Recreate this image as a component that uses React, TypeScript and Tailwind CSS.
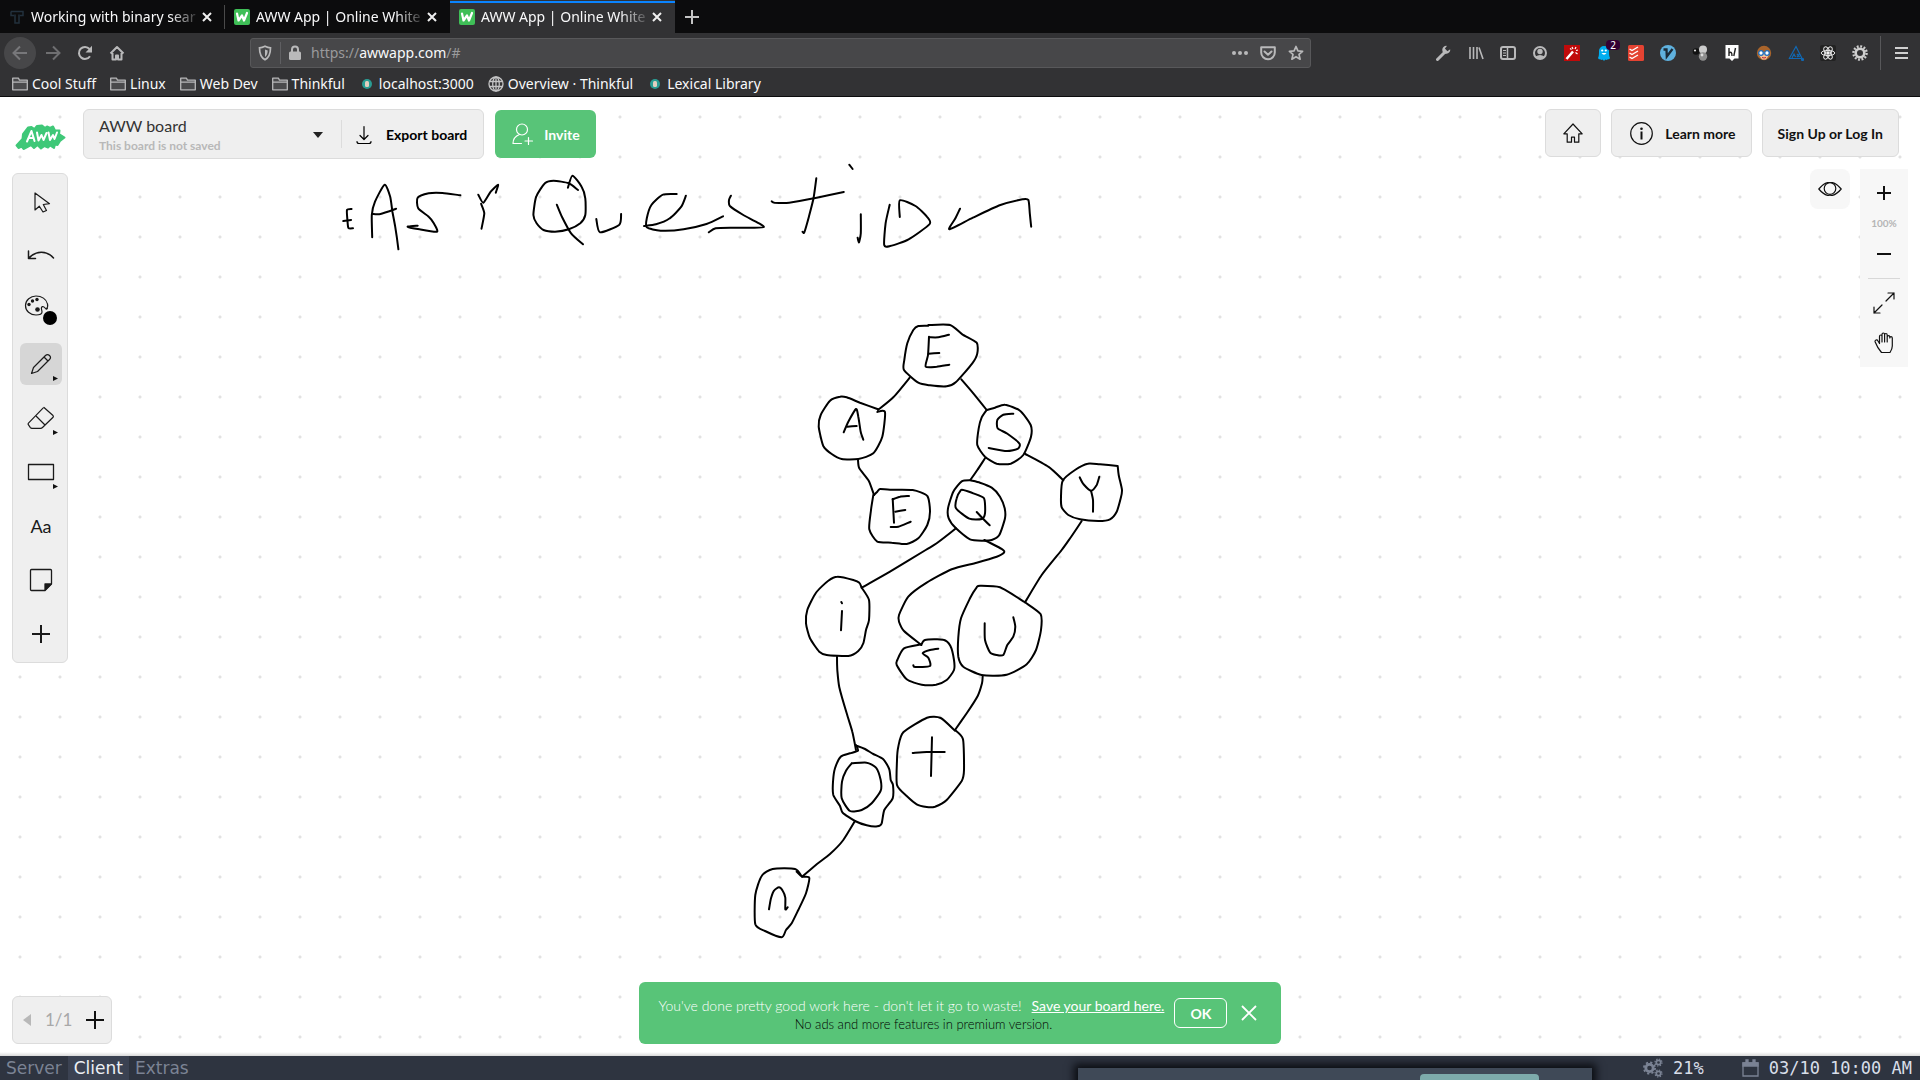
import React from "react";

type Children = { children: React.ReactNode };

/* ---------- freehand strokes ---------- */

type Sheet = { x: number; y: number; sx: number; sy: number; strokes: string[] };

const sheets: Sheet[] = [
  {
    x: 330, y: 90, sx: 720 / 1568, sy: 1 / 3,
    strokes: [
      "47,357 37,360 38,390 40,414 50,415",
      "29,393 46,390",
      "92,442 91,375 98,335 119,284 131,320 136,365 142,410 149,478",
      "92,372 110,372 144,356",
      "284,316 245,309 215,310 191,323 192,355 215,380 226,400 233,425 195,418 169,410 191,407",
      "323,314 334,338 350,305 366,284 361,308",
      "329,341 336,370 330,416",
      "540,300 520,280 487,272 468,280 449,320 443,375 450,400 465,420 490,425 520,418 545,400 556,375 556,325 548,290 528,257 518,293",
      "494,344 505,380 525,430 551,463",
      "580,387 588,427 630,404 634,372",
      "755,312 725,314 700,345 690,385 690,412 720,422 770,418 820,402 856,379",
      "684,408 710,403 740,385 765,350 775,317",
      "873,317 869,330 871,348 900,375 945,411 880,413 840,415 825,427",
      "962,334 968,338 1000,338 1060,323 1119,306",
      "1059,265 1053,325 1043,380 1033,427 1029,425",
      "1131,224 1138,237",
      "1156,373 1156,430 1152,457 1149,443",
      "1219,344 1210,400 1207,465 1220,468 1260,448 1306,402 1300,380 1275,348 1241,331 1241,381",
      "1372,356 1362,385 1349,418 1400,383 1460,345 1508,328 1521,330 1524,370 1527,410",
    ],
  },
  {
    x: 790, y: 310, sx: 1 / 3, sy: 1 / 3,
    strokes: [
      "415,47 385,48 370,60 352,100 343,150 342,180 385,218 420,226 470,229 497,217 547,160 562,130 560,98 517,73 480,45 415,45",
      "417,80 414,135 407,170 440,170 478,164",
      "418,82 445,82 477,74",
      "416,131 448,129",
      "359,203 310,262 264,300",
      "264,298 210,278 170,262 150,260 120,272 92,315 86,350 100,408 125,432 155,447 205,447 250,430 277,380 285,306 262,306",
      "161,367 175,335 198,297 205,320 212,365 220,389",
      "172,350 200,348",
      "204,450 208,475 236,512 252,555",
      "252,555 262,545 270,537 300,539 368,540 412,558 420,605 412,645 385,685 350,702 305,698 262,695 238,658 243,600 250,555",
      "308,567 312,638",
      "308,568 330,560 357,558",
      "316,605 346,600",
      "302,651 325,650 362,635",
      "514,208 550,250 590,300",
      "590,300 615,293 645,284 690,302 722,345 723,380 700,435 662,461 620,461 585,440 562,405 566,355 575,322 590,300",
      "670,311 640,314 622,330 623,355 650,370 688,400 684,416 650,423 596,414",
      "585,445 562,480 541,510",
      "541,511 515,514 490,545 474,595 476,625 498,655 540,688 580,692 605,690 628,675 645,625 644,595 630,560 605,533 570,518 541,511",
      "524,541 550,550 582,565 585,610 575,627 538,626 498,595 500,565 512,541 520,540",
      "560,606 599,646",
      "706,432 775,470 820,511",
      "983,468 930,463 893,461 855,480 818,512 813,560 815,592 835,615 870,628 925,633 960,628 980,605 992,565 996,540 986,495 983,468",
      "869,502 880,522 903,542 920,525 928,500",
      "903,542 909,570 909,605",
    ],
  },
  {
    x: 780, y: 550, sx: 1 / 3, sy: 1 / 3,
    strokes: [
      "905,-87 875,-42 845,0 785,75 735,157",
      "528,-65 470,-20 437,0 330,65 245,113",
      "613,-30 667,-2 672,8 650,20 590,38 515,58 440,98 385,140 357,195 357,215 372,243 424,285",
      "245,113 238,98 220,90 172,80 145,92 108,128 82,180 78,220 90,265 118,305 140,315 205,318 235,303 250,280 258,240 267,210 267,150 245,113",
      "184,156 186,160",
      "186,183 183,241",
      "171,320 172,360 178,412 200,490 217,545 228,600",
      "424,285 435,270 490,269 511,287 522,330 522,360 500,390 468,404 425,404 380,388 350,345 352,330 372,295 424,283",
      "475,296 450,300 428,310 445,323 450,348 405,351 400,346",
      "735,157 660,112 600,107 590,112 570,145 543,205 535,262 535,320 550,350 605,375 680,374 740,343 768,300 783,240 782,193 735,157",
      "614,220 615,270 630,307 650,315 670,315 682,285 700,260 706,230 700,202",
      "608,378 606,400 593,438 560,490 525,540",
      "525,542 482,504 441,503 370,547 355,590 351,630 351,705 380,738 410,763 440,771 465,770 500,750 545,693 552,660 549,568 525,540",
      "456,562 453,678",
      "398,609 440,606 494,606",
    ],
  },
  {
    x: 740, y: 730, sx: 1 / 3, sy: 1 / 3,
    strokes: [
      "348,45 354,62 330,70 302,80 285,115 279,155 280,195 300,228 308,248 345,273 380,286 412,289 425,280 433,240 458,205 459,165 452,150 448,118 430,88 400,72 375,57 352,48",
      "335,100 380,98 408,113 422,150 422,182 395,220 365,240 330,243 305,205 306,155 318,122 335,100",
      "345,273 310,330 270,372 230,403 186,440",
      "170,425 186,440 208,443 198,490 175,540 155,580 138,600 125,622 75,603 46,583 46,495 65,438 98,417 165,417 186,440",
      "87,538 93,505 102,482 117,472 128,482 136,503 136,538 143,532",
    ],
  },
];

const r1 = (n: number) => Math.round(n * 10) / 10;

function toPath(s: string, sh: Sheet) {
  const p = s.split(" ").map((q) => {
    const [a, b] = q.split(",").map(Number);
    return [sh.x + a * sh.sx, sh.y + b * sh.sy];
  });
  let d = `M${r1(p[0][0])} ${r1(p[0][1])}`;
  for (let i = 0; i < p.length - 1; i++) {
    const a = p[i - 1] ?? p[i];
    const b = p[i];
    const c = p[i + 1];
    const e = p[i + 2] ?? c;
    const k = 9;
    d += `C${r1(b[0] + (c[0] - a[0]) / k)} ${r1(b[1] + (c[1] - a[1]) / k)} ${r1(c[0] - (e[0] - b[0]) / k)} ${r1(c[1] - (e[1] - b[1]) / k)} ${r1(c[0])} ${r1(c[1])}`;
  }
  return d;
}

function Drawing() {
  return (
    <svg viewBox="0 97 1920 959" className="absolute left-0 top-0 w-full" fill="none" stroke="#000" strokeWidth="2" strokeLinecap="round" strokeLinejoin="round" aria-label="Binary search tree sketch">
      {sheets.flatMap((sh, i) => sh.strokes.map((s, j) => <path key={`${i}-${j}`} d={toPath(s, sh)} />))}
    </svg>
  );
}

/* ---------- icons ---------- */

function Svg({ w = 16, h = w, children, ...rest }: { w?: number; h?: number } & React.SVGProps<SVGSVGElement>) {
  return (
    <svg width={w} height={h} viewBox={`0 0 ${w} ${h}`} fill="none" stroke="currentColor" strokeWidth="2" className="shrink-0" aria-hidden="true" {...rest}>
      {children}
    </svg>
  );
}

const AwwFavicon = () => (
  <Svg stroke="#fff" strokeWidth="2.2" strokeLinecap="round" strokeLinejoin="round">
    <rect width="16" height="16" rx="2" fill="#3fbf57" stroke="none" />
    <path d="M3 4.5 4.5 11.5 8 6.5 10 11.5 13 4" />
  </Svg>
);
const ThinkfulFavicon = () => (
  <Svg stroke="#22303d" strokeWidth="1.5">
    <path d="M2 2.5h12v4h-3M2 2.5v4h3M6 5.5v8.5h4V5.5" />
  </Svg>
);
const FolderIcon = () => (
  <Svg stroke="#b8b8b9" strokeWidth="1.3">
    <path d="M.7 13.8V2.2h5.8l1 2h7.8v9.6zM.7 6.2h14.6" fill="#4a4a4c" strokeLinejoin="round" />
  </Svg>
);
const GlobeIcon = () => (
  <Svg stroke="#c4c4c5" strokeWidth="1.3">
    <circle cx="8" cy="8" r="7" />
    <ellipse cx="8" cy="8" rx="3.3" ry="7" />
    <path d="M8 1v14M1.5 5.5h13M1.5 10.5h13" />
  </Svg>
);
const DotFavicon = () => (
  <Svg stroke="none">
    <circle cx="8" cy="8" r="5" fill="#2a9d94" />
    <rect x="6" y="5" width="4" height="6" rx="1.5" fill="#e3cfc0" />
  </Svg>
);

/* ---------- browser ---------- */

function Tab({ title, icon, active = false, divider = false }: { title: string; icon: React.ReactNode; active?: boolean; divider?: boolean }) {
  return (
    <div className={`relative flex h-full w-[225px] items-center pl-[9px] pr-3 ${active ? "bg-[#323234]" : ""}`}>
      {active && <span className="absolute inset-x-0 top-px h-0.5 bg-[#0a84ff]" />}
      {divider && <span className="absolute right-0 top-[5px] h-6 w-px bg-[#4a4a4a]" />}
      {icon}
      <span className="ml-1.5 flex-1 whitespace-nowrap text-[14px] text-[#f9f9fa] [mask-image:linear-gradient(to_right,#000_82%,transparent)]">{title}</span>
      <button aria-label="Close tab" className="text-[#f0f0f0]">
        <Svg w={12}><path d="M2 2l8 8M10 2l-8 8" /></Svg>
      </button>
    </div>
  );
}

function Extensions() {
  const icons = [
    <Svg key="wrench" strokeWidth="3"><path d="M1.5 14.5 9 7" strokeLinecap="round" /><path d="M14.2 4.2a4 4 0 1 1-3.300-3.300L8.900 3.500l2.500 2.800z" fill="currentColor" stroke="none" /></Svg>,
    <Svg key="lib"><path d="M2 2v12M5.5 2v12M9 2v12M11 2.5l4 11.5" strokeWidth="1.6" /></Svg>,
    <Svg key="side"><rect x="1" y="2" width="14" height="12" rx="2" /><path d="M7.5 2v12" strokeWidth="1.5" /><path d="M3 5.5h3M3 8h3M3 10.5h3" strokeWidth="1" /></Svg>,
    <Svg key="acct"><circle cx="8" cy="8" r="6" /><circle cx="8" cy="6.500" r="2.7" fill="currentColor" stroke="none" /><path d="M3.5 11.5q4.500-3 9 0L8 14.500z" fill="currentColor" stroke="none" /></Svg>,
    <Svg key="wand" stroke="#fff"><rect width="16" height="16" fill="#c00a0a" stroke="none" /><path d="M2.5 14 9 6.5" strokeWidth="2.5" /><path d="M8 2l1 2M12 2l-1 2M14 5l-2 .5M13.5 9l-2-1.500M6 3.500l1.500 1" strokeWidth="1.2" /></Svg>,
    <span key="ghost" className="relative block">
      <Svg stroke="none"><path d="M2 13c1-2 1-4 1-7a5 5 0 0 1 10 0c0 3 0 5 1 7-1 2-2 1-2.500 1.500-1 1-1.500 0-2 0-1 1.500-2 1.500-3 0-.5 0-1 1-2 0C4 14 3 15 2 13z" fill="#00aef0" /><circle cx="6.2" cy="5.5" r="1.1" fill="#fff" /><circle cx="9.8" cy="5.5" r="1.1" fill="#fff" /><path d="M5.5 8q2.500 3.500 5 0z" fill="#fff" /></Svg>
      <span className="absolute -top-[5px] left-2.5 flex h-2.5 w-3.5 items-center justify-center rounded-sm bg-[#330033] text-[10px] leading-none text-white">2</span>
    </span>,
    <Svg key="todo" stroke="#fff" strokeWidth="1.4"><rect width="16" height="16" rx="1.5" fill="#e44332" stroke="none" /><path d="M1.5 4 4 5.500 10 2M1.500 8 4 9.500 10 6M1.500 12 4 13.500 10 10" /></Svg>,
    <Svg key="vim" stroke="#1b2b38"><circle cx="8" cy="8" r="8" fill="#5fb1de" stroke="none" /><path d="M3.5 4.500h3l.3 7L12.500 4" strokeWidth="2.3" /></Svg>,
    <Svg key="balls" stroke="none"><circle cx="4" cy="6.5" r="3.3" fill="#111" /><circle cx="3" cy="5.5" r="1.1" fill="#ddd" /><circle cx="11" cy="4.5" r="4" fill="#ccc" /><circle cx="11" cy="11.5" r="4.2" fill="#8e8e8e" /><circle cx="10" cy="10" r="1.4" fill="#ddd" /></Svg>,
    <Svg key="hyp" stroke="#222" strokeWidth="1.6"><path d="M1.5 0h13v13.500h-4L8 16l-2.500-2.500h-4z" fill="#fff" stroke="none" /><path d="M5 3v8M5 8q3-2.500 3 3M11.500 3 9.800 11" strokeWidth="1.4" /></Svg>,
    <Svg key="face" stroke="#1d6fc0" strokeWidth="1.3"><circle cx="8" cy="8" r="7.2" fill="#a9642b" stroke="none" /><path d="M3 7h10v3l-3 4.500H6L3 10z" fill="#f3c196" stroke="none" /><circle cx="5" cy="8" r="2.3" fill="#fff" /><circle cx="11" cy="8" r="2.3" fill="#fff" /><path d="M6 12.500q2 1 4 0" stroke="#b23" strokeWidth="1" /></Svg>,
    <Svg key="tri" stroke="#1168b3" strokeWidth="1.2"><path d="M1 14 8 1.500 14 13.500H1M4 13l2-4 1.500 3M9 9l2.500 3M11.500 9 9 12" /><circle cx="14.5" cy="14.5" r="1" fill="#1168b3" /></Svg>,
    <Svg key="react" stroke="#e8e8e8" strokeWidth="1"><rect width="16" height="16" rx="2" fill="#222" stroke="none" /><circle cx="8" cy="8" r="1.3" fill="#fff" /><ellipse cx="8" cy="8" rx="6.8" ry="2.6" /><ellipse cx="8" cy="8" rx="6.8" ry="2.6" transform="rotate(60 8 8)" /><ellipse cx="8" cy="8" rx="6.8" ry="2.6" transform="rotate(120 8 8)" /></Svg>,
    <Svg key="gear" stroke="#cfcfcf"><circle cx="8" cy="8" r="6.6" strokeWidth="2.4" strokeDasharray="1.9 1.556" /><circle cx="8" cy="8" r="4.3" strokeWidth="2.6" /></Svg>,
  ];
  return (
    <div className="flex items-center gap-4 text-[#b9b9ba]">
      {icons.map((icon, i) => (
        <button key={i} aria-label={`Extension ${i + 1}`} className="size-4">{icon}</button>
      ))}
    </div>
  );
}

function Bookmark({ icon, label }: { icon: React.ReactNode; label: string }) {
  return (
    <a href="#" className="flex items-center gap-1 whitespace-nowrap">
      {icon}
      {label}
    </a>
  );
}

function Browser() {
  return (
    <header className="bg-[#323234] font-['Noto_Sans',sans-serif]">
      <div className="flex h-[33px] items-center bg-[#0c0c0d]">
        <Tab title="Working with binary sear" icon={<ThinkfulFavicon />} divider />
        <Tab title="AWW App | Online White" icon={<AwwFavicon />} />
        <Tab title="AWW App | Online White" icon={<AwwFavicon />} active />
        <button aria-label="New tab" className="ml-2.5 text-[#c4c4c4]">
          <Svg w={14}><path d="M7 0v14M0 7h14" /></Svg>
        </button>
      </div>
      <div className="flex h-10 items-center pl-1 text-[#b9b9ba]">
        <button aria-label="Back" className="flex size-8 items-center justify-center rounded-full bg-[#474749] text-[#77777a]">
          <Svg><path d="M15 8H1.500M8 1.500 1.500 8 8 14.500" /></Svg>
        </button>
        <button aria-label="Forward" className="ml-[9px] text-[#6f6f71]">
          <Svg><path d="M1 8h13.500M8 1.500 14.500 8 8 14.500" /></Svg>
        </button>
        <button aria-label="Reload" className="ml-4">
          <Svg><path d="M13 11.200A6 6 0 1 1 12.500 4" /><path d="M15 .8v6.700H8.500z" fill="currentColor" stroke="none" /></Svg>
        </button>
        <button aria-label="Home" className="ml-4">
          <Svg><path d="M1.500 8.500 8 2l6.500 6.500M3.500 8v6.500h3.500v-4h2v4h3.500V8" strokeLinejoin="round" /></Svg>
        </button>
        <div className="ml-[125px] flex h-[30px] w-[1061px] items-center rounded-[3px] border border-[#58585a] bg-[#474749] px-1.5">
          <Svg><path d="M8 1.200q3 1.500 5.500 1.600c0 5.500-.8 9.500-5.500 12C3.300 12.300 2.500 8.300 2.500 2.800Q5 2.700 8 1.200z" strokeWidth="1.7" /><path d="M8 4.500v7.500c2-1.500 2.600-3.500 2.700-6.500Q9.300 5.200 8 4.500z" fill="currentColor" stroke="none" /></Svg>
          <span className="ml-[7px] h-[22px] w-px bg-[#5f5f62]" />
          <Svg className="ml-1.5 shrink-0"><path d="M5 7V4.500a3 3 0 0 1 6 0V7" /><rect x="2" y="6.5" width="12" height="8.5" rx="1.5" fill="currentColor" stroke="none" /></Svg>
          <div className="relative ml-2 flex-1 text-[14px] leading-6">
            <input aria-label="Address" className="absolute inset-0 w-full bg-transparent text-transparent outline-none" />
            <span className="text-[#9a9a9c]">https://</span><span className="text-[#f9f9fa]">awwapp.com</span><span className="text-[#9a9a9c]">/#</span>
          </div>
          <div className="flex items-center gap-3">
            <button aria-label="Page actions"><Svg><g fill="currentColor" stroke="none"><circle cx="2" cy="8" r="2" /><circle cx="8" cy="8" r="2" /><circle cx="14" cy="8" r="2" /></g></Svg></button>
            <button aria-label="Save to Pocket"><Svg><path d="M1.200 2.200h13.600v5.300a6.800 6.800 0 0 1-13.600 0zM4.500 6.500 8 9.800l3.500-3.300" strokeLinejoin="round" strokeLinecap="round" /></Svg></button>
            <button aria-label="Bookmark this page"><Svg><path d="M8 1.500 9.900 5.900 14.600 6.300 11 9.400 12.100 14.200 8 11.700 3.900 14.200 5 9.400 1.400 6.300 6.100 5.900z" strokeWidth="1.7" strokeLinejoin="round" /></Svg></button>
          </div>
        </div>
        <div className="ml-auto flex items-center">
          <Extensions />
          <span className="ml-3 h-[34px] w-px bg-[#58585a]" />
          <button aria-label="Open menu" className="ml-3.5 mr-3">
            <Svg w={13} h={16} stroke="#d0d0d0"><path d="M0 3h13M0 8h13M0 13h13" /></Svg>
          </button>
        </div>
      </div>
      <nav className="flex h-6 items-center gap-3.5 border-b border-[#0c0c0d] pb-0.5 pl-3 text-[14px] leading-5 text-[#f9f9fa]">
        <Bookmark icon={<FolderIcon />} label="Cool Stuff" />
        <Bookmark icon={<FolderIcon />} label="Linux" />
        <Bookmark icon={<FolderIcon />} label="Web Dev" />
        <Bookmark icon={<FolderIcon />} label="Thinkful" />
        <Bookmark icon={<DotFavicon />} label="localhost:3000" />
        <Bookmark icon={<GlobeIcon />} label="Overview · Thinkful" />
        <Bookmark icon={<DotFavicon />} label="Lexical Library" />
      </nav>
    </header>
  );
}

/* ---------- whiteboard ---------- */

const panel = "rounded-md border border-[#dcdcdc] bg-[#efefef]";

function TopBar() {
  return (
    <div className="flex items-start pl-[14px] pr-[21px] pt-3">
      <a href="#" aria-label="AWW" className="mt-3.5">
        <Svg w={52} h={28} stroke="#fff" strokeWidth="2" strokeLinecap="round" strokeLinejoin="round">
          <path d="M2.500 22.500 8.500 16 9 11 14 4.500 17.500 4 20.500 6 23 3 28 2.500 31 5 33 3.500 36 5 39 3.500 41 7.500 45.500 7.500 45 11 50.500 14.500 46 18 43.500 22 41 21.500 40 25 36 22.500 34 24.500 30.500 23 27 25.500 23.500 22 20 25 17 22 9.500 26 7.500 23.500 4.500 25z" fill="#3fc878" stroke="#3fc878" />
          <path d="M13 18.500 17.500 8l3 10M14.500 15h5M23 9.500l1.500 8 3-5.500 2 5 3-7M34.500 9.500l1.500 7.500 3-5 1.500 4 2.500-6.500" />
        </Svg>
      </a>
      <div className={`ml-[17px] flex h-[50px] items-center ${panel}`}>
        <button className="flex w-[257px] items-center justify-between pl-[15px] pr-[18px] text-left">
          <span className="pt-1">
            <span className="block text-[16px] leading-5 text-[#333]">AWW board</span>
            <span className="block text-[12px] font-bold leading-5 text-[#b8b8b8]">This board is not saved</span>
          </span>
          <Svg w={10} h={6} className="mt-0.5 shrink-0"><path d="M0 0h10L5 6z" fill="#222" stroke="none" /></Svg>
        </button>
        <span className="h-7 w-px bg-[#dcdcdc]" />
        <button className="flex items-center pl-[14px] pr-4 pt-px text-[14px] font-bold text-black">
          <Svg w={16} h={20} strokeWidth="1.2" strokeLinecap="round" strokeLinejoin="round"><path d="M8 1.500v13M4 10.500l4 4 4-4M1 16.500q0 2 2 2h10q2 0 2-2" /></Svg>
          <span className="ml-[14px]">Export board</span>
        </button>
      </div>
      <button className="ml-[11px] mt-px flex h-12 items-center rounded-md bg-[#58c478] pl-[17px] pr-4 text-[14px] font-bold text-white">
        <Svg w={22} h={22} strokeWidth="1.2" strokeLinecap="round" strokeLinejoin="round"><ellipse cx="10" cy="6.5" rx="5.5" ry="5.5" /><path d="M7.500 11.500C3.500 13 1 15.500 1 20.500h8.500M16.500 14.500v7M13 18h7.500" /></Svg>
        <span className="ml-2.5">Invite</span>
      </button>
      <div className="ml-auto flex gap-2.5 text-[14px] font-bold text-[#111]">
        <button aria-label="Home" className={`flex h-12 w-14 items-center justify-center ${panel}`}>
          <Svg w={20} h={20} strokeWidth="1.2" strokeLinejoin="round"><path d="M10 1 .8 10.800h3.400v8.400h4.300v-5h3v5h4.300v-8.400h3.400z" /></Svg>
        </button>
        <button className={`flex h-12 items-center pl-[18px] pr-[15px] ${panel}`}>
          <Svg w={23} h={23} strokeWidth="1.2"><circle cx="11.5" cy="11.5" r="10.8" /><path d="M11.500 9.500v8" strokeWidth="2" /><circle cx="11.5" cy="6.8" r="1.3" fill="currentColor" stroke="none" /></Svg>
          <span className="ml-3">Learn more</span>
        </button>
        <button className={`flex h-12 items-center px-[15px] ${panel}`}>Sign Up or Log In</button>
      </div>
    </div>
  );
}

function Tool({ label, active = false, more = false, children }: Children & { label: string; active?: boolean; more?: boolean }) {
  return (
    <div className="flex h-[54px] items-center justify-center">
      <button aria-label={label} className={`relative flex size-[42px] items-center justify-center rounded-md ${active ? "bg-[#d6d6d6]" : ""}`}>
        {children}
        {more && <Svg w={5} h={5} className="absolute bottom-1 right-1"><path d="M0 0l5 2.500L0 5z" fill="#111" stroke="none" /></Svg>}
      </button>
    </div>
  );
}

const thin = { strokeWidth: 1.2, strokeLinecap: "round", strokeLinejoin: "round" } as const;

function Toolbar() {
  return (
    <div className={`mt-1 w-14 py-px pl-0.5 text-[#1a1a1a] ${panel}`}>
      <Tool label="Select"><Svg w={20} h={22} {...thin}><path d="M4 2v17l4.300-3.800L12 21l3.500-1.500-3.200-6 6.200-.8z" /></Svg></Tool>
      <Tool label="Undo"><Svg w={28} h={12} {...thin} strokeWidth={1.5}><path d="M1.500 1v7.500h7M1.500 8.500C9 0 20 .5 26.500 8" /></Svg></Tool>
      <Tool label="Color">
        <Svg w={34} h={32} {...thin}>
          <path d="M22 15c1.500-1 2-3 1.500-5-1-5-6-8-11.500-8S1.500 6 1.500 11.500 6 21 12 21c3 0 6-.5 6-3 0-2-1-3-.5-4.500.8-2 3-.5 4 1 .8 1.200 1.800.8 2-.5" />
          <g fill="currentColor" stroke="none"><circle cx="5" cy="10.5" r="1.7" /><circle cx="8.5" cy="7" r="1.7" /><circle cx="13" cy="5.5" r="1.7" /><circle cx="13.5" cy="15.5" r="2.3" /></g>
          <circle cx="26" cy="24" r="7" fill="#000" stroke="none" />
        </Svg>
      </Tool>
      <Tool label="Pencil" active more><Svg w={22} h={22} {...thin}><path d="M1.500 20.500 3.500 14.500 15.500 2.500q2-2 4 0t0 4L7.500 18.500zM14 4l4 4" /></Svg></Tool>
      <Tool label="Eraser" more><Svg w={28} h={24} {...thin}><path d="M17 1.500 26 9.500q.8 1-.2 2L15.500 21.500q-.8.8-2 .8H5q-1 0-1.800-1L1.500 18.800q-.8-1 .2-2L16 2.200M9.500 10.500 18 19" /></Svg></Tool>
      <Tool label="Shape" more><Svg w={28} h={18} {...thin} strokeWidth={1.3}><rect x="1.5" y="1.5" width="25" height="15" /></Svg></Tool>
      <Tool label="Text"><span className="text-[18px]">Aa</span></Tool>
      <Tool label="Note"><Svg w={24} h={24} {...thin} strokeWidth={1.3}><path d="M1.500 2.500q0-1 1-1h19q1 0 1 1V16L16 22.500H2.500q-1 0-1-1z" /><path d="M22 16h-6v6z" fill="currentColor" /></Svg></Tool>
      <Tool label="Add"><Svg w={18}><path d="M9 0v18M0 9h18" /></Svg></Tool>
    </div>
  );
}

function ViewTools() {
  return (
    <div className="flex items-start gap-2.5 text-[#111]">
      <button aria-label="Toggle visibility" className="flex size-10 items-center justify-center rounded-lg bg-[#f7f7f7]">
        <Svg w={24} h={14} {...thin}><path d="M.8 7Q12-6.500 23.200 7 12 20.500.8 7z" /><circle cx="12" cy="6.5" r="5.8" /></Svg>
      </button>
      <div className="flex h-[198px] w-12 flex-col items-center bg-[#f7f7f7] pt-[17px]">
        <button aria-label="Zoom in"><Svg w={14}><path d="M7 0v14M0 7h14" /></Svg></button>
        <span className="mt-[17px] text-[10px] font-bold leading-3 text-[#b5b5b5]">100%</span>
        <button aria-label="Zoom out" className="mt-[18px]"><Svg w={14}><path d="M0 7h14" /></Svg></button>
        <span className="mt-[17px] h-px w-8 bg-[#d8d8d8]" />
        <button aria-label="Full screen" className="mt-[13px]"><Svg w={22} {...thin}><path d="M13 9l8-8M15 1h6v6M9 13l-8 8M1 15v6h6" /></Svg></button>
        <button aria-label="Pan" className="mt-[18px]"><Svg w={20} h={22} {...thin}><path d="M5.500 11.500V4.500q0-1.500 1.300-1.500T8 4.500V10M8 4.500V2.500Q8 1 9.300 1t1.300 1.500V10M10.600 3q0-1.500 1.300-1.500t1.300 1.500v7M13.200 5q0-1.400 1.300-1.400T15.800 5v1q0-1.300 1.200-1.300T18.300 6v8q0 3-2.300 6.500H7.500C5 17.500 3 15 1.200 10q-.5-1.500.8-2t2 1l1.500 2.500" /></Svg></button>
      </div>
    </div>
  );
}

function BottomBar() {
  return (
    <div className="grid grid-cols-[1fr_auto_1fr] items-end px-3 pb-3">
      <div className={`flex h-12 w-[100px] items-center pl-2.5 ${panel}`}>
        <button aria-label="Previous page"><Svg w={8} h={12}><path d="M8 0v12L0 6z" fill="#b8b8b8" stroke="none" /></Svg></button>
        <span className="ml-3.5 w-[26px] text-[17px] text-[#a8a8a8]">1/1</span>
        <button aria-label="Add page" className="ml-[15px] text-[#111]"><Svg w={18}><path d="M9 0v18M0 9h18" /></Svg></button>
      </div>
      <div className="flex h-[62px] items-center rounded-md bg-[#58c478] pl-5 pr-6 text-white">
        <div className="pt-1 text-center text-[14px] leading-[18px]">
          <p><span className="font-light">You've done pretty good work here - don't let it go to waste!</span><a href="#" className="ml-2.5 underline">Save your board here.</a></p>
          <p className="pl-6 text-[13px] font-light text-black">No ads and more features in premium version.</p>
        </div>
        <button className="ml-2.5 h-[30px] w-[53px] rounded-md border border-white text-[14px] font-bold">OK</button>
        <button aria-label="Dismiss" className="ml-3.5"><Svg w={16} strokeWidth="1.8"><path d="M1 1l14 14M15 1 1 15" /></Svg></button>
      </div>
    </div>
  );
}

function Board() {
  return (
    <main className="relative flex flex-1 flex-col overflow-hidden bg-white bg-[radial-gradient(circle_at_20px_20px,#e2e2e2_1px,transparent_2px)] bg-[length:40px_40px] font-[Lato,sans-serif]">
      <Drawing />
      <div className="relative flex flex-1 flex-col">
        <TopBar />
        <div className="mb-auto mt-2.5 flex items-start justify-between px-3">
          <Toolbar />
          <ViewTools />
        </div>
        <BottomBar />
      </div>
      <div className="absolute inset-x-0 bottom-0 h-1 bg-gradient-to-b from-transparent to-black/15" />
    </main>
  );
}

function StatusBar() {
  return (
    <footer className="relative flex h-6 items-center overflow-hidden bg-[#2e3440] text-[17px] leading-none text-[#7b8394]">
      <div className="flex h-full items-center font-['DejaVu_Sans',sans-serif]">
        <button className="px-1.5">Server</button>
        <button className="h-full bg-[#3b4252] px-1.5 text-[#eceff4]">Client</button>
        <button className="px-1.5">Extras</button>
      </div>
      <div className="absolute left-[1078px] top-3 h-6 w-[514px] bg-[#3f4957] shadow-[0_0_8px_4px_#0b0d12]">
        <div className="ml-[342px] mt-1.5 h-6 w-[119px] rounded-t bg-[#7dabab]" />
      </div>
      <div className="ml-auto flex items-center pr-2 font-['DejaVu_Sans_Mono',monospace] text-[#d8dee9]">
        <Svg w={20} h={20} stroke="#7b8394">
          <circle cx="6.5" cy="10" r="3.7" strokeWidth="2.8" /><circle cx="6.5" cy="10" r="5.6" strokeWidth="1.8" strokeDasharray="2.2 2.198" />
          <circle cx="15.5" cy="4.5" r="2.2" strokeWidth="1.7" /><circle cx="15.5" cy="4.5" r="3.5" strokeWidth="1.2" strokeDasharray="1.4 1.349" />
          <circle cx="15.5" cy="15.5" r="2.2" strokeWidth="1.7" /><circle cx="15.5" cy="15.5" r="3.5" strokeWidth="1.2" strokeDasharray="1.4 1.349" />
        </Svg>
        <span className="ml-2.5">21%</span>
        <Svg w={17} h={18} stroke="#7b8394" strokeWidth="1.3" className="ml-[38px] shrink-0"><path d="M1 4h15v13H1z" /><path d="M1 4h15v3H1zM4 1h2v3H4zM11 1h2v3h-2z" fill="#7b8394" /></Svg>
        <span className="ml-2.5 whitespace-pre">03/10 10:00 AM</span>
      </div>
    </footer>
  );
}

export default function App() {
  return (
    <div className="flex min-h-screen flex-col">
      <Browser />
      <Board />
      <StatusBar />
    </div>
  );
}
